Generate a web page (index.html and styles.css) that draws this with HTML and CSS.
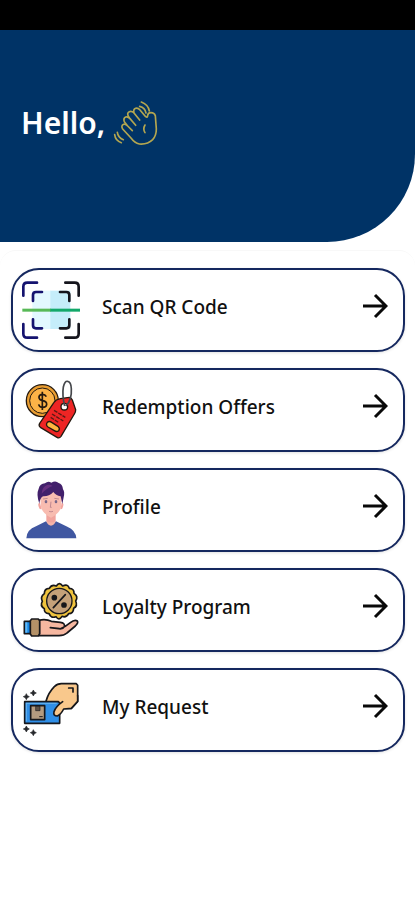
FILE: index.html
```html
<!DOCTYPE html>
<html lang="en">
<head>
<meta charset="utf-8">
<meta name="viewport" content="width=device-width, initial-scale=1">
<title>Home</title>
<link rel="stylesheet" href="styles.css">
</head>
<body>
<div class="status-bar"></div>
<header class="hero">
  <h1 class="greeting">Hello,</h1>
  <svg class="wave" viewBox="336 58 135 138" aria-hidden="true">
    <path d="M390 172L365 145Q359 135 368 131Q374 129 380 136L394 150M380 136L370 123Q366 113 374 109Q381 107 387 114L404 134M387 114L382 107Q377 97 385 93Q392 90 399 97L416 118M399 97Q396 86 404 83Q411 81 417 88L434 108Q440 112 440 104Q441 96 450 96Q460 96 463 105L466 145Q466 165 455 177Q440 192 415 190Q401 187 390 172M432 133Q425 145 432 156"/>
    <path d="M416 77Q432 81 435 97M421 64Q442 72 445 91M349 155Q351 171 367 177M341 162Q343 180 361 186"/>
  </svg>
</header>
<main class="panel">
  <nav class="menu" aria-label="Main menu">
    <a class="card" href="#scan">
      <svg class="icon" viewBox="33 42 180 180" aria-hidden="true">
        <path fill="#e3f8ff" d="M67 74h56v115H67z"/><path fill="#c5edfa" d="M121 74h60v115h-60z"/>
        <g fill="none" stroke-width="8" stroke-linecap="round">
          <path stroke="#15136f" d="M40 89V62Q40 50 52 50H81M69 105V87Q69 78 78 78H96M69 160V178Q69 187 78 187H96M40 174V203Q40 215 52 215H81"/>
          <path stroke="#15151d" d="M166 50H194Q206 50 206 62V89M150 78H169Q178 78 178 87V105M178 160V178Q178 187 169 187H150M206 174V203Q206 215 194 215H166"/>
        </g>
        <path fill="#58b957" d="M37 128h86v9H37z"/><path fill="#13a86a" d="M121 128h89v9h-89z"/>
      </svg>
      <span class="label">Scan QR Code</span>
      <svg class="arrow" viewBox="0 0 26 26" aria-hidden="true"><path d="M1 13H24M13 2L24 13L13 24"/></svg>
    </a>
    <a class="card" href="#offers">
      <svg class="icon" viewBox="33 41 180 180" aria-hidden="true">
        <g stroke="#24190f" stroke-width="4" stroke-linejoin="round">
          <circle cx="97" cy="103" r="48" fill="#e99d31"/>
          <circle cx="97" cy="103" r="38" fill="#fcb347" stroke-width="3"/>
          <path fill="none" stroke-width="5" d="M109 91Q105 83 96 84Q86 86 87 94Q88 101 98 103Q110 105 110 114Q109 123 98 123Q88 123 86 114M97 76V131"/>
          <path fill="#ee2524" d="M151 97L178 93Q184 94 187 101L197 130Q197 138 193 143L153 210Q148 217 141 213L91 183Q85 178 89 171L132 108Q137 100 151 97Z"/>
          <circle cx="163" cy="121" r="10" fill="#fff"/>
          <path fill="none" stroke="#45474b" stroke-width="5" d="M164 119Q156 86 160 62Q164 43 173 45Q183 46 184 67Q186 99 168 119"/>
          <path fill="none" stroke="#591915" d="M132 132L166 153M126 143L160 164M122 153L145 168" stroke-dasharray="12 3"/>
          <path fill="#ffb63e" d="M112 168Q118 163 125 168L145 181Q151 187 146 193Q140 198 133 193L114 182Q106 176 112 168Z"/>
        </g>
      </svg>
      <span class="label">Redemption Offers</span>
      <svg class="arrow" viewBox="0 0 26 26" aria-hidden="true"><path d="M1 13H24M13 2L24 13L13 24"/></svg>
    </a>
    <a class="card" href="#profile">
      <svg class="icon" viewBox="33 42 180 180" aria-hidden="true">
        <path fill="#f1a49d" d="M109 139H137V165L123 179L109 165Z"/>
        <path fill="#f8bcb0" d="M90 88Q123 62 156 88L153 123Q149 142 123 155Q98 143 93 123Z"/>
        <path fill="#f3a59e" d="M90 111Q82 110 86 122Q88 131 95 130ZM155 111Q163 110 159 122Q157 131 151 130Z"/>
        <path fill="#42206b" d="M88 113Q78 85 86 68Q90 53 105 52Q114 44 124 50Q137 42 146 51Q157 53 159 70Q165 78 161 94L157 114L152 91Q137 88 130 78Q117 92 99 91Q90 96 88 113Z"/>
        <path fill="#673080" d="M106 60Q117 52 128 60Q112 65 95 83Q96 67 106 60Z"/>
        <path fill="#4057a1" d="M49 217Q50 191 78 181L108 166Q123 182 138 166L172 182Q197 192 199 217Z"/>
        <path fill="#f5b4a9" d="M108 165Q123 174 138 165Q132 179 123 179Q114 179 108 165Z"/>
        <path fill="none" stroke="#a46f80" stroke-width="2" d="M99 99L113 97M133 97L147 99M123 107L121 124H125M117 136Q123 139 129 136"/>
        <g fill="#77678a"><ellipse cx="108" cy="107" rx="4" ry="5"/><ellipse cx="138" cy="107" rx="4" ry="5"/></g>
      </svg>
      <span class="label">Profile</span>
      <svg class="arrow" viewBox="0 0 26 26" aria-hidden="true"><path d="M1 13H24M13 2L24 13L13 24"/></svg>
    </a>
    <a class="card" href="#loyalty">
      <svg class="icon" viewBox="33 44 180 180" aria-hidden="true">
        <g stroke="#17171b" stroke-width="5" stroke-linejoin="round" stroke-linecap="round">
          <path fill="#efc33e" d="M139 62Q148 48 158 62Q173 54 178 69Q193 70 192 84Q206 93 197 107Q204 122 191 129Q190 145 176 145Q168 159 156 153Q147 168 138 154Q123 160 117 145Q102 144 103 130Q89 121 97 108Q90 94 103 85Q103 69 118 69Q125 56 139 62Z"/>
          <circle cx="148" cy="107" r="38" fill="#c5a179" stroke-width="4"/>
          <path d="M130 127L166 88"/><circle cx="133" cy="97" r="6" fill="#17171b"/><circle cx="162" cy="119" r="6" fill="#17171b"/>
          <path fill="#f6b7a0" d="M86 165Q108 160 124 168L151 171Q166 173 163 184Q159 192 146 190L121 187M151 190Q166 185 181 172Q194 161 202 167Q206 172 196 182L171 203Q162 211 147 211H88V165M121 187L148 190"/>
          <path fill="#1687e8" d="M43 168H68V205H43Z"/><path fill="#65b9f2" stroke="none" d="M46 171H52V202H46Z"/>
          <path fill="#b49167" d="M65 161H85L89 166V205L85 212H65L61 206V166Z"/>
        </g>
      </svg>
      <span class="label">Loyalty Program</span>
      <svg class="arrow" viewBox="0 0 26 26" aria-hidden="true"><path d="M1 13H24M13 2L24 13L13 24"/></svg>
    </a>
    <a class="card" href="#request">
      <svg class="icon" viewBox="33 41 180 180" aria-hidden="true">
        <g stroke="#17181c" stroke-width="5" stroke-linejoin="round" stroke-linecap="round">
          <path fill="#f9c88c" d="M108 105Q115 79 133 61Q142 52 154 52H199L203 57V105L184 126H151L105 111Z"/>
          <path fill="#2f8fe8" d="M44 106H145L149 110V171H44Z"/>
          <path stroke="#67b4ef" fill="none" stroke-width="3" d="M49 111H139M49 111V164"/>
          <path fill="#b49b80" d="M62 118H104V160H62Z"/>
          <path fill="#5d5045" stroke-width="2" d="M78 120H90V133H78Z"/><path d="M89 151H97" stroke-width="3"/>
          <path fill="#f9c88c" d="M158 106Q137 121 132 136Q129 149 142 149Q153 144 161 128L184 126L203 105V88"/>
          <path fill="none" d="M176 65H189V77"/>
        </g>
        <path fill="#25272b" stroke="#25272b" stroke-width="2" d="M49 82L52 88L58 91L52 94L49 100L46 94L40 91L46 88ZM70 71L73 77L79 80L73 83L70 89L67 83L61 80L67 77ZM49 179L52 185L58 188L52 191L49 197L46 191L40 188L46 185ZM70 190L73 196L79 199L73 202L70 208L67 202L61 199L67 196Z"/>
      </svg>
      <span class="label">My Request</span>
      <svg class="arrow" viewBox="0 0 26 26" aria-hidden="true"><path d="M1 13H24M13 2L24 13L13 24"/></svg>
    </a>
  </nav>
</main>
</body>
</html>
```
FILE: styles.css
```css
* { box-sizing: border-box; }
body {
  margin: 0;
  min-height: 100vh;
  background: #fff;
  color: #111;
  font-family: "Noto Sans", "Open Sans", sans-serif;
}
.status-bar { height: 30px; background: #000; }
.hero {
  display: flex;
  align-items: center;
  gap: 8px;
  padding: 70px 21px 96px;
  border-bottom-right-radius: 88px;
  background: #003366;
  color: #fff;
}
.greeting {
  margin: 0;
  font-size: 30px;
  line-height: 46px;
  font-weight: 600;
}
.wave {
  width: 45px;
  height: 46px;
  fill: none;
  stroke: #b3a650;
  stroke-width: 5;
  stroke-linecap: round;
  stroke-linejoin: round;
}
.panel {
  margin-top: 8px;
  padding: 17px 10px 24px 11px;
  border-top: 1px solid #f8f8f8;
  border-radius: 16px 16px 0 0;
}
.menu { display: flex; flex-direction: column; gap: 16px; }
.card {
  display: flex;
  align-items: center;
  padding: 10px 15px 10px 8px;
  border: 2px solid #15285f;
  border-radius: 28px;
  background: #fff;
  box-shadow: 0 1px 3px #0000001f;
  color: inherit;
  text-decoration: none;
}
.icon { width: 60px; height: 60px; flex: none; overflow: visible; }
.label {
  flex: 1;
  margin-left: 21px;
  padding-bottom: 6px;
  font-size: 19px;
  line-height: 28px;
  font-weight: 500;
}
.arrow {
  width: 26px;
  height: 26px;
  margin-bottom: 9px;
  fill: none;
  stroke: #090909;
  stroke-width: 3;
}
```
